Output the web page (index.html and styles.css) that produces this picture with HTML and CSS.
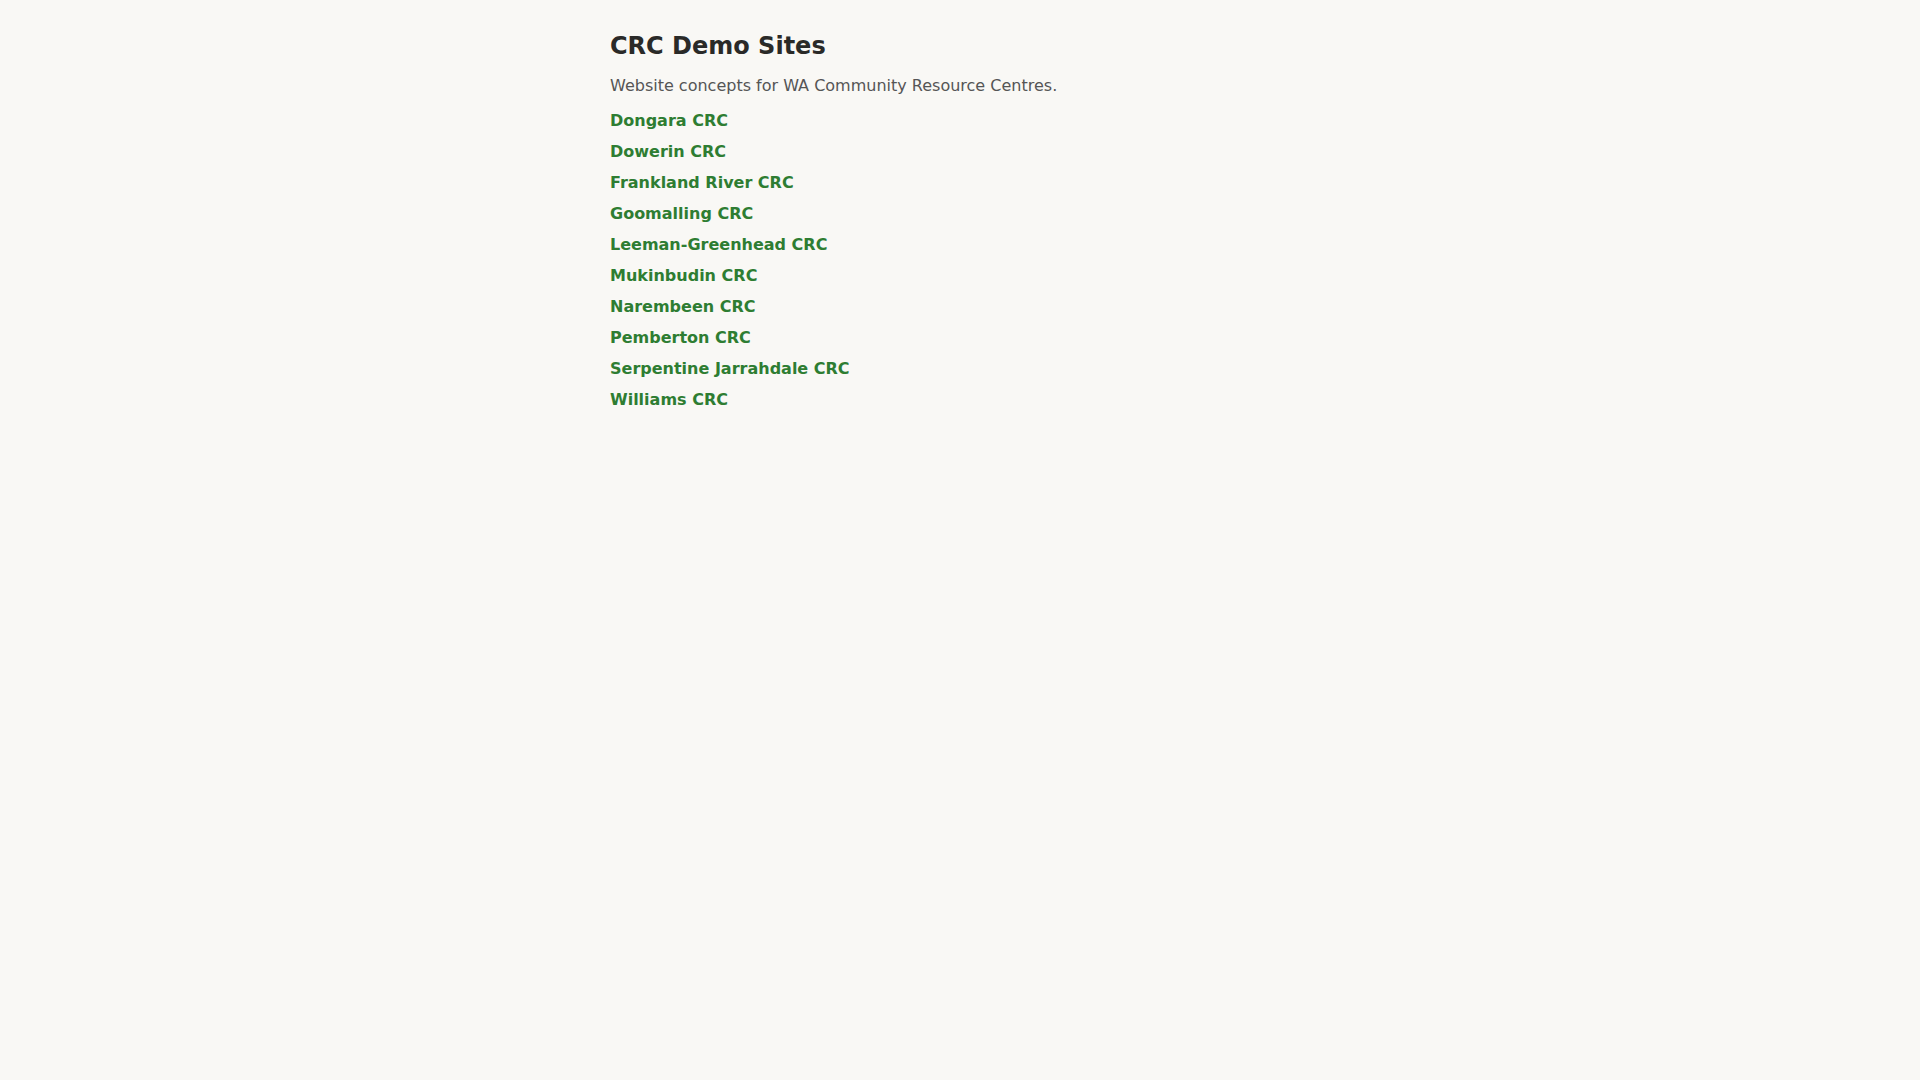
FILE: index.html
```html
<!DOCTYPE html>
<html lang="en">
<head>
    <meta charset="UTF-8">
    <meta name="viewport" content="width=device-width, initial-scale=1.0">
    <title>CRC Demo Sites</title>
    <link rel="stylesheet" href="styles.css">
</head>
<body>
    <div class="container">
        <h1>CRC Demo Sites</h1>
        <p class="intro">Website concepts for WA Community Resource Centres.</p>
        <ul class="sites">
            <li><a href="#">Dongara CRC</a></li>
            <li><a href="#">Dowerin CRC</a></li>
            <li><a href="#">Frankland River CRC</a></li>
            <li><a href="#">Goomalling CRC</a></li>
            <li><a href="#">Leeman-Greenhead CRC</a></li>
            <li><a href="#">Mukinbudin CRC</a></li>
            <li><a href="#">Narembeen CRC</a></li>
            <li><a href="#">Pemberton CRC</a></li>
            <li><a href="#">Serpentine Jarrahdale CRC</a></li>
            <li><a href="#">Williams CRC</a></li>
        </ul>
    </div>
</body>
</html>
```

FILE: styles.css
```css
* {
    margin: 0;
    padding: 0;
    box-sizing: border-box;
}

body {
    font-family: "DejaVu Sans", sans-serif;
    background: #f9f8f5;
    color: #2a2a28;
    padding: 32px 16px;
}

.container {
    max-width: 700px;
    margin: 0 auto;
}

h1 {
    font-size: 24px;
    font-weight: bold;
    line-height: 28px;
    margin-bottom: 16px;
}

.intro {
    font-size: 16px;
    line-height: 19px;
    color: #555;
    margin-bottom: 16px;
}

.sites {
    list-style: none;
}

.sites li {
    line-height: 19px;
    margin-bottom: 12px;
}

.sites a {
    color: #2e7d32;
    font-weight: bold;
    text-decoration: none;
}
```
